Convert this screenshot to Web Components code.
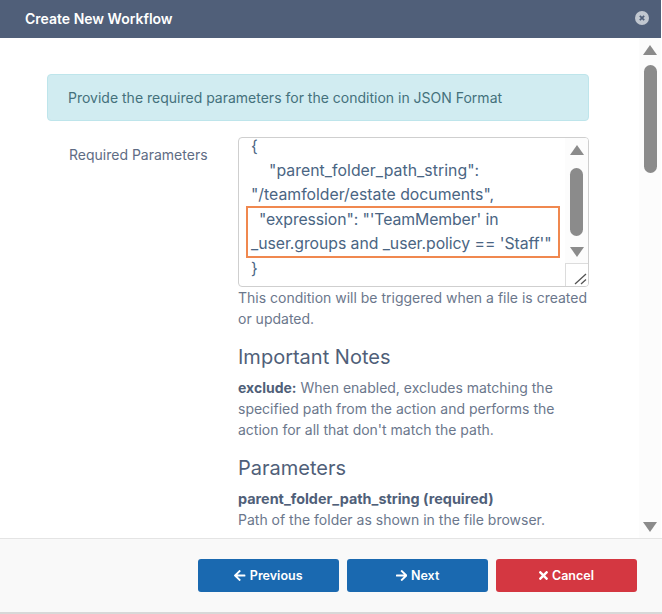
<!DOCTYPE html>
<html lang="en">
<head>
<meta charset="utf-8">
<title>Create New Workflow</title>
<style>
    html, body { margin: 0; height: 100%; background: #fff; overflow: hidden; }
    body { font-family: Inter, "Liberation Sans", sans-serif; font-size: 14px; color: #5e6c84; }
    strong { display: inline-block; font-weight: 700; color: #505f79; }
</style>
</head>
<body>
<wf-dialog heading="Create New Workflow">
    <wf-alert>Provide the required parameters for the condition in JSON Format</wf-alert>
    <wf-field label="Required Parameters">
        <wf-json-box></wf-json-box>
        <wf-help>
            <p>This condition will be triggered when a file is created or updated.</p>
            <h3>Important Notes</h3>
            <p><strong>exclude:</strong> <span>When enabled, excludes matching the</span><br>specified path from the action and performs the<br>action for all that don't match the path.</p>
            <h3>Parameters</h3>
            <p><strong style="font-size:14.4px">parent_folder_path_string (required)</strong><br>Path of the folder as shown in the file browser.</p>
        </wf-help>
    </wf-field>
    <wf-button slot="footer" icon="left">Previous</wf-button>
    <wf-button slot="footer" icon="right">Next</wf-button>
    <wf-button slot="footer" icon="times" color="#d43741">Cancel</wf-button>
</wf-dialog>

<script>
const ICONS = {
    left: ["0 0 448 512", "M257.5 445.1l-22.2 22.2c-9.4 9.4-24.6 9.4-33.9 0L7 273c-9.4-9.4-9.4-24.6 0-33.9L201.4 44.7c9.4-9.4 24.6-9.4 33.9 0l22.2 22.2c9.5 9.5 9.3 25-.4 34.3L136.6 216H424c13.3 0 24 10.7 24 24v32c0 13.3-10.7 24-24 24H136.6l120.5 114.8c9.8 9.3 10 24.8.4 34.3z"],
    right: ["0 0 448 512", "M190.5 66.9l22.2-22.2c9.4-9.4 24.6-9.4 33.9 0L441 239c9.4 9.4 9.4 24.6 0 33.9L246.6 467.3c-9.4 9.4-24.6 9.4-33.9 0l-22.2-22.2c-9.5-9.5-9.3-25 .4-34.3L311.4 296H24c-13.3 0-24-10.7-24-24v-32c0-13.3 10.7-24 24-24h287.4L190.9 101.2c-9.8-9.3-10-24.8-.4-34.3z"],
    times: ["0 0 352 512", "M242.72 256l100.07-100.07c12.28-12.28 12.28-32.19 0-44.48l-22.24-22.24c-12.28-12.28-32.19-12.28-44.48 0L176 189.28 75.93 89.21c-12.28-12.28-32.19-12.28-44.48 0L9.21 111.45c-12.28 12.28-12.28 32.19 0 44.48L109.28 256 9.21 356.07c-12.28 12.28-12.28 32.19 0 44.48l22.24 22.24c12.28 12.28 32.2 12.28 44.48 0L176 322.72l100.07 100.07c12.28 12.28 32.2 12.28 44.48 0l22.24-22.24c12.28-12.28 12.28-32.19 0-44.48L242.72 256z"]
}

class WfScrollbar extends HTMLElement {

    constructor() {
        super()
        this.shadow = this.attachShadow({mode: "open"})
    }

    connectedCallback() {
        const thumbTop = this.getAttribute("thumb-top")
        const thumbHeight = this.getAttribute("thumb-height")
        this.shadow.innerHTML = `
            <style>
                :host {
                    display: flex;
                    flex-direction: column;
                    align-items: center;
                    justify-content: space-between;
                    width: 22px;
                    box-sizing: border-box;
                    background: #fcfcfc;
                    padding: 7px 0 6px;
                    height: 100%;
                }
                .up, .down { width: 0; height: 0; border-left: 7.5px solid transparent; border-right: 7.5px solid transparent; }
                .up { border-bottom: 10px solid #8b8b8b; }
                .down { border-top: 10px solid #8b8b8b; }
                .track { flex: 1; width: 13px; }
                .thumb { width: 13px; border-radius: 7px; background: #8b8b8b; margin-top: ${thumbTop}px; height: ${thumbHeight}px; }
            </style>
            <div class="up"></div>
            <div class="track"><div class="thumb"></div></div>
            <div class="down"></div>
        `
    }

}

class WfDialog extends HTMLElement {

    constructor() {
        super()
        this.shadow = this.attachShadow({mode: "open"})
    }

    connectedCallback() {
        this.shadow.innerHTML = `
            <style>
                :host {
                    display: flex;
                    flex-direction: column;
                    width: 662px;
                    height: 614px;
                    box-sizing: border-box;
                    border-bottom: 2px solid #d8d8d8;
                    background: #fff;
                }
                header {
                    display: flex;
                    align-items: center;
                    justify-content: space-between;
                    height: 38px;
                    flex: none;
                    background: #505f79;
                    padding: 0 12px 2px 25px;
                    box-sizing: border-box;
                    margin-right: 1px;
                    color: #fff;
                    font-size: 14px;
                    font-weight: 600;
                }
                header svg { width: 14px; height: 14px; display: block; }
                .body { flex: 1; display: flex; min-height: 0; }
                .content { flex: 1; min-width: 0; padding: 36px 0 0 47px; overflow: hidden; box-sizing: border-box; }
                .inner { width: 542px; }
                wf-scrollbar { margin-right: 1px; }
                footer {
                    flex: none;
                    display: flex;
                    justify-content: flex-end;
                    gap: 8px;
                    height: 74px;
                    box-sizing: border-box;
                    padding: 20px 25px 0 0;
                    background: #f9f9f9;
                    border-top: 1px solid #e4e4e4;
                }
            </style>
            <header>
                <span>${this.getAttribute("heading")}</span>
                <svg viewBox="0 0 16 16"><circle cx="8" cy="8" r="8" fill="#c1c7d0"/><path d="M5.5 5.5l5 5m0-5l-5 5" stroke="#505f79" stroke-width="2"/></svg>
            </header>
            <div class="body">
                <div class="content"><div class="inner"><slot></slot></div></div>
                <wf-scrollbar thumb-top="10" thumb-height="108"></wf-scrollbar>
            </div>
            <footer><slot name="footer"></slot></footer>
        `
    }

}

class WfAlert extends HTMLElement {

    constructor() {
        super()
        this.attachShadow({mode: "open"}).innerHTML = `
            <style>
                :host {
                    display: block;
                    box-sizing: border-box;
                    height: 47px;
                    line-height: 45px;
                    padding: 0 20px;
                    background: #d1ecf1;
                    border: 1px solid #bee5eb;
                    border-radius: 4px;
                    color: #44717c;
                    font-size: 14px;
                }
            </style>
            <slot></slot>
        `
    }

}

class WfField extends HTMLElement {

    constructor() {
        super()
        this.shadow = this.attachShadow({mode: "open"})
    }

    connectedCallback() {
        this.shadow.innerHTML = `
            <style>
                :host { display: flex; margin-top: 16px; }
                label { width: 191px; flex: none; padding: 7px 0 0 22px; box-sizing: border-box; line-height: 22px; font-size: 14px; color: #5e6c84; }
                .control { width: 351px; flex: none; }
            </style>
            <label>${this.getAttribute("label")}</label>
            <div class="control"><slot></slot></div>
        `
    }

}

class WfJsonBox extends HTMLElement {

    constructor() {
        super()
        this.attachShadow({mode: "open"}).innerHTML = `
            <style>
                :host {
                    display: flex;
                    box-sizing: border-box;
                    height: 150px;
                    border: 1px solid #cfcfcf;
                    border-radius: 4px;
                    background: #fff;
                    overflow: hidden;
                }
                .text { flex: 1; min-width: 0; font-size: 15.8px; line-height: 24px; color: #4a6583; white-space: nowrap; margin: -3px 0 0 12px; }
                .mark { border: 2px solid #f0884f; margin: -1px 5px -1px -5px; padding-left: 3px; height: 48px; line-height: 24px; letter-spacing: -0.05px; }
                .side { width: 23px; flex: none; display: flex; flex-direction: column; }
                wf-scrollbar { flex: 1; width: 23px; min-height: 0; padding: 7px 0 6px; height: auto; }
                .grip { height: 23px; flex: none; box-sizing: border-box; border: 1px solid #dcdcdc; border-right: 0; border-bottom: 0; background: #fff; }
                .grip svg { display: block; width: 22px; height: 22px; }
            </style>
            <div class="text">
                <div>{</div>
                <div style="padding-left:18px;letter-spacing:.05px">"parent_folder_path_string":</div>
                <div>"/teamfolder/estate documents",</div>
                <div class="mark">
                    <div style="padding-left:8px;letter-spacing:-.1px">"expression": "'TeamMember' in</div>
                    <div>_user.groups and _user.policy == 'Staff'"</div>
                </div>
                <div>}</div>
            </div>
            <div class="side">
                <wf-scrollbar thumb-top="13" thumb-height="68"></wf-scrollbar>
                <div class="grip"><svg viewBox="0 0 22 22"><path d="M9 20L20 10M15 20l5-4.5" stroke="#555" stroke-width="1.3" fill="none"/></svg></div>
            </div>
        `
    }

}

class WfHelp extends HTMLElement {

    constructor() {
        super()
        this.attachShadow({mode: "open"}).innerHTML = `
            <style>
                :host { display: block; font-size: 14px; line-height: 21px; color: #6b778c; }
                ::slotted(p) { margin: 0 0 16px; }
                ::slotted(h3) { margin: 0 0 8px; font-size: 20px; font-weight: 400; line-height: 24px; color: #505f79; }
            </style>
            <slot></slot>
        `
    }

}

class WfButton extends HTMLElement {

    constructor() {
        super()
        this.shadow = this.attachShadow({mode: "open"})
    }

    connectedCallback() {
        const icon = ICONS[this.getAttribute("icon")]
        this.shadow.innerHTML = `
            <style>
                :host {
                    display: flex;
                    align-items: center;
                    justify-content: center;
                    gap: 4px;
                    width: 141px;
                    height: 33px;
                    border-radius: 3px;
                    background: ${this.getAttribute("color") || "#1a69b0"};
                    color: #fff;
                    font-size: 12.5px;
                    font-weight: 600;
                }
                svg { height: 13px; width: auto; fill: #fff; display: block; }
            </style>
            <svg viewBox="${icon[0]}"><path d="${icon[1]}"/></svg>
            <span><slot></slot></span>
        `
    }

}

window.customElements.define("wf-scrollbar", WfScrollbar)
window.customElements.define("wf-dialog", WfDialog)
window.customElements.define("wf-alert", WfAlert)
window.customElements.define("wf-field", WfField)
window.customElements.define("wf-json-box", WfJsonBox)
window.customElements.define("wf-help", WfHelp)
window.customElements.define("wf-button", WfButton)
</script>
</body>
</html>
